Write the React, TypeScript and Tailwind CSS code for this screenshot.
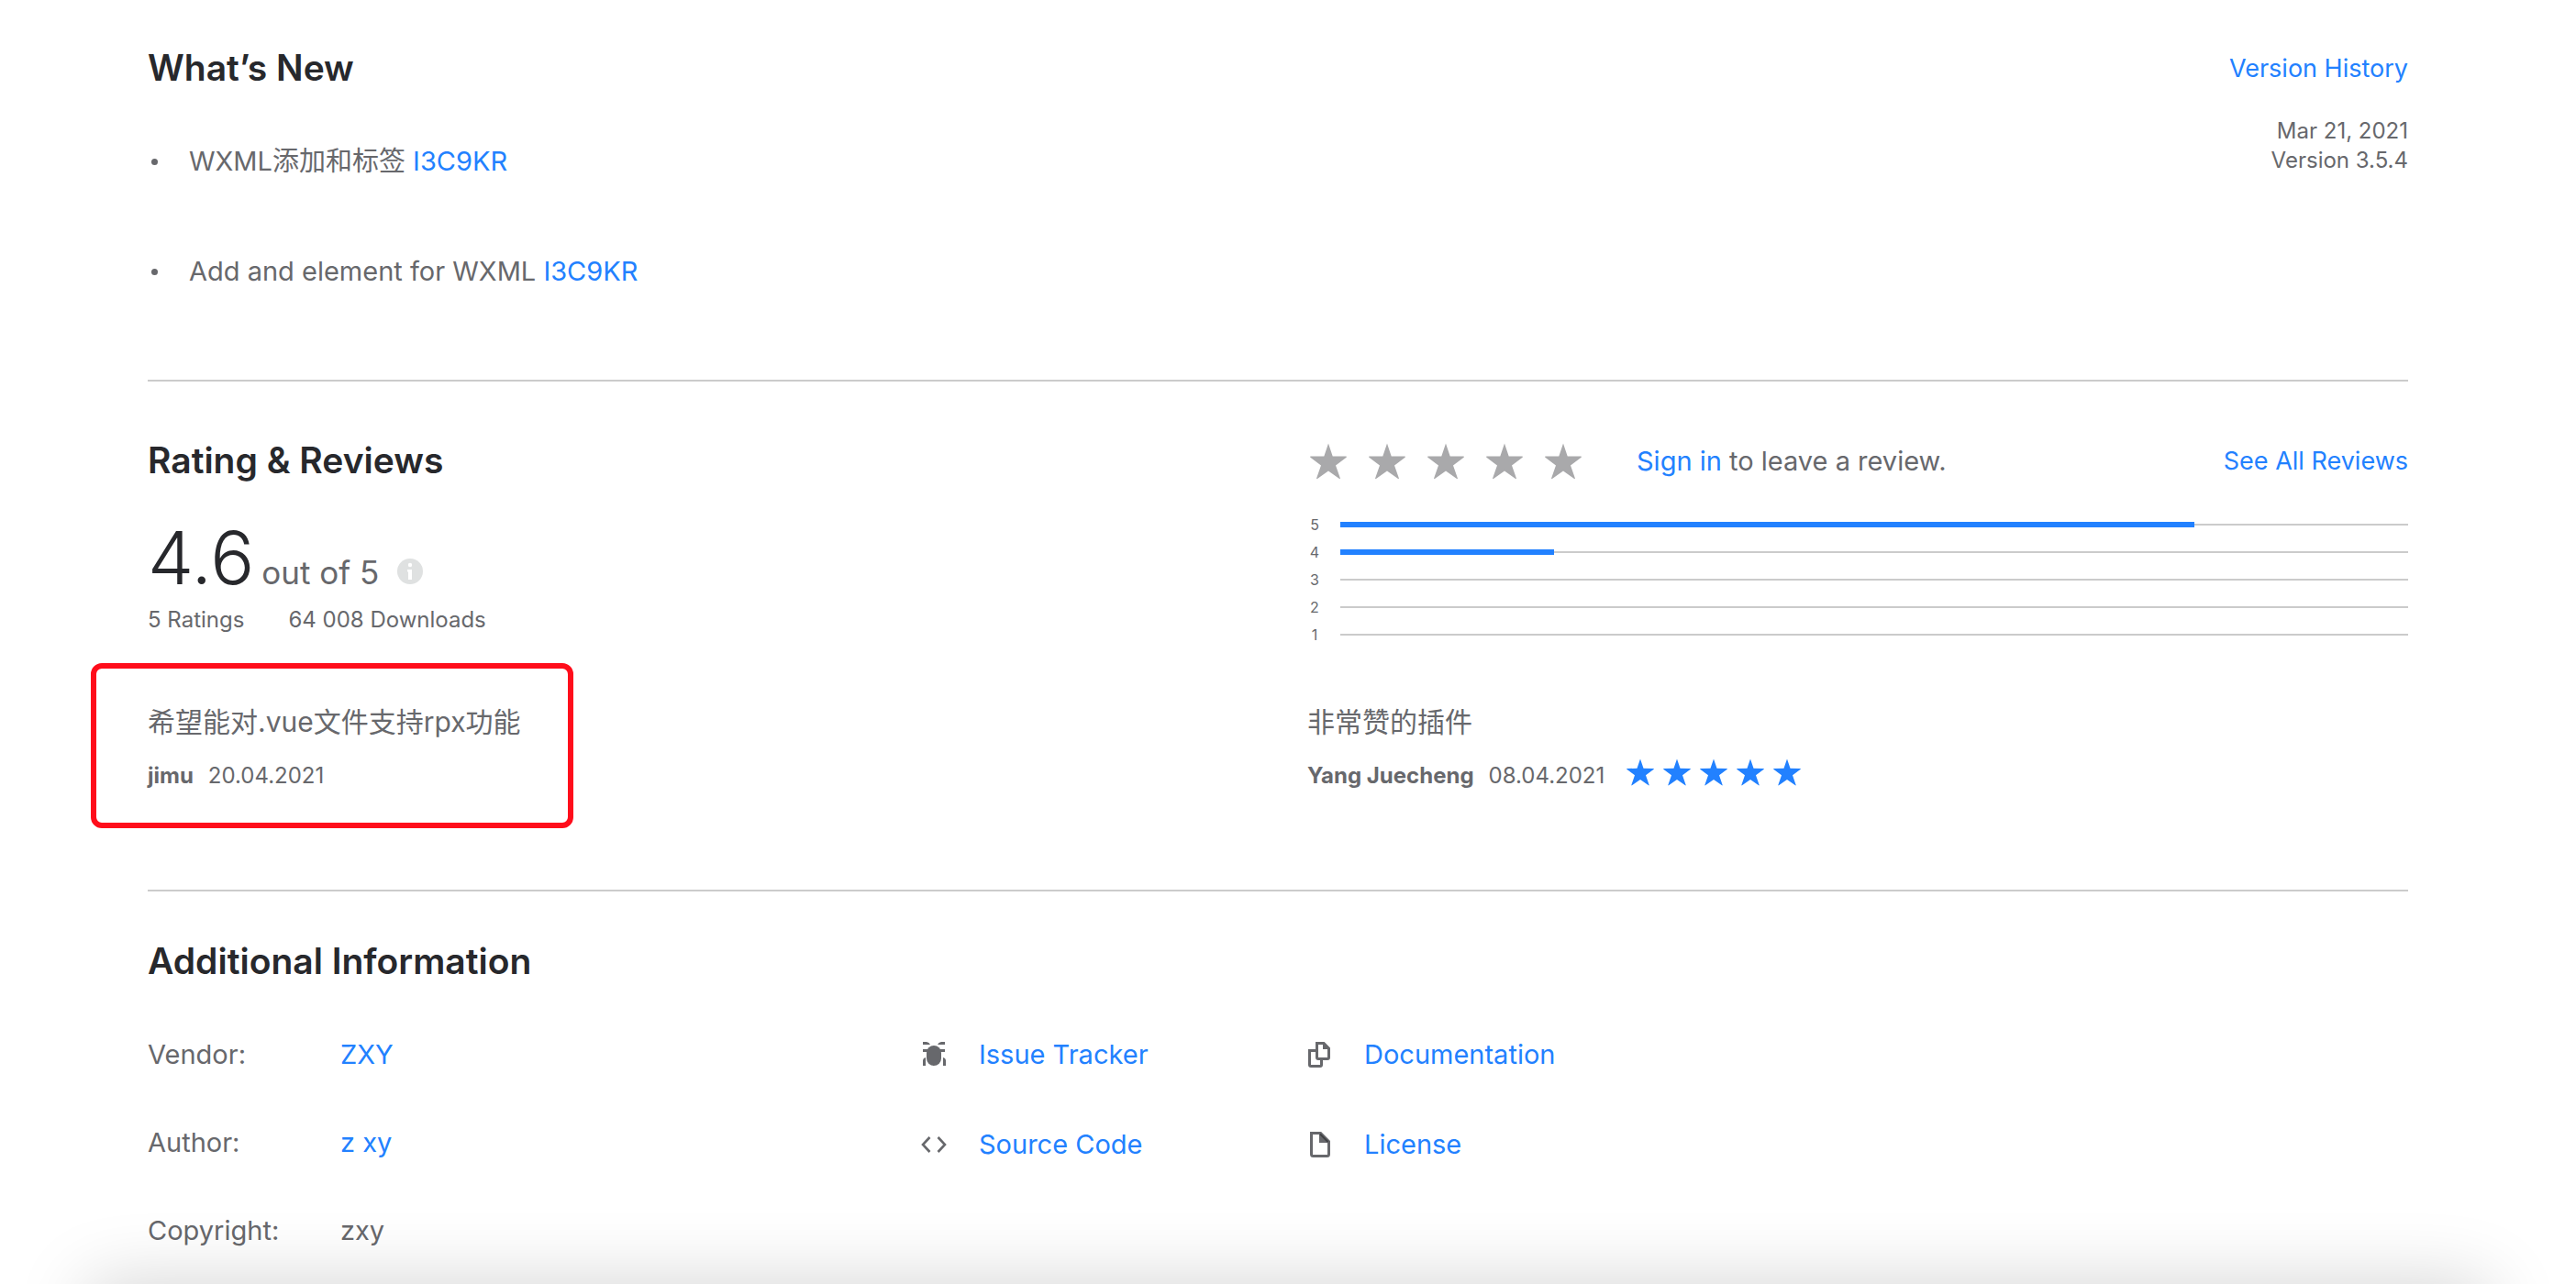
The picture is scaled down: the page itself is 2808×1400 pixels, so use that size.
import type { ReactNode } from "react";

function Star({ className }: { className: string }) {
  return (
    <svg viewBox="0 0 40 40" className={className} fill="currentColor" aria-hidden="true">
      <path d="M20 0.6 L24.7 14.4 L39.4 14.6 Q40.2 15 39.6 15.7 L28 24.4 L32.9 38.6 Q32.9 39.5 32 39.1 L20 30.6 L8 39.1 Q7.1 39.5 7.1 38.6 L12 24.4 L0.4 15.7 Q-0.2 15 0.6 14.6 L15.3 14.4 Z" />
    </svg>
  );
}

function BugIcon() {
  return (
    <svg viewBox="0 0 28 28" className="size-7" fill="currentColor" aria-hidden="true">
      <rect x="6" y="4" width="16" height="22" rx="8" />
      <path d="M2 0h4q3 0.300 4 3H2zM26 0h-4q-3 0.300-4 3h8zM2 8h24v3H2zM2 26v-6q0.300-2.500 3-3v9zM27 26v-6q-0.300-2.500-3-3v9z" />
    </svg>
  );
}

function CodeIcon() {
  return (
    <svg viewBox="0 0 28 28" className="size-7" fill="none" stroke="currentColor" strokeWidth="2.600" aria-hidden="true">
      <path d="M9.500 6 L2 14 L9.500 22 M18.500 6 L26 14 L18.500 22" />
    </svg>
  );
}

function CopyIcon() {
  return (
    <svg viewBox="0 0 28 28" className="size-7" fill="none" stroke="currentColor" strokeWidth="3" aria-hidden="true">
      <path d="M11.500 1.500h7.500l5.500 5.500v10q0 1.500-1.500 1.500h-10q-1.500 0-1.500-1.500z" />
      <path d="M18 1v7h7z" fill="currentColor" stroke="none" />
      <path d="M10 9.500H3.500v15.500q0 1.500 1.500 1.500h10q1.500 0 1.500-1.500V19" />
    </svg>
  );
}

function FileIcon() {
  return (
    <svg viewBox="0 0 28 28" className="size-7" fill="none" stroke="currentColor" strokeWidth="3" aria-hidden="true">
      <path d="M5.500 1.500h10l9 9v14q0 2-2 2h-15q-2 0-2-2z" />
      <path d="M14 2v10h10z" fill="currentColor" stroke="none" />
      <path d="M15 2.500l8.500 8.500" stroke="#3f4043" strokeWidth="2" />
    </svg>
  );
}

function Link({ children, className = "" }: { children: ReactNode; className?: string }) {
  return (
    <a href="#" className={`text-[#2281ff] ${className}`}>
      {children}
    </a>
  );
}

const HEADING = "text-[39px] leading-[48px] font-semibold text-[#27282c]";

const changes = ["WXML添加和标签", "Add and element for WXML"];

const distribution = [
  { stars: 5, share: 80 },
  { stars: 4, share: 20 },
  { stars: 3, share: 0 },
  { stars: 2, share: 0 },
  { stars: 1, share: 0 },
];

const details = [
  { label: "Vendor:", value: <Link>ZXY</Link> },
  { label: "Author:", value: <Link>z xy</Link> },
  { label: "Copyright:", value: "zxy" },
];

const resources = [
  { label: "Issue Tracker", icon: <BugIcon /> },
  { label: "Documentation", icon: <CopyIcon /> },
  { label: "Source Code", icon: <CodeIcon /> },
  { label: "License", icon: <FileIcon /> },
];

function Byline({ author, date, rating = 0 }: { author: string; date: string; rating?: number }) {
  return (
    <div className="mt-[11px] flex items-center text-2xl leading-12">
      <b>{author}</b>
      <time className="ml-4">{date}</time>
      {rating > 0 && (
        <div className="ml-6 flex gap-2.5 pb-2 text-[#2281ff]" role="img" aria-label={`${rating} stars`}>
          {Array.from({ length: rating }, (_, i) => (
            <Star key={i} className="size-[30px]" />
          ))}
        </div>
      )}
    </div>
  );
}

export default function App() {
  return (
    <main className="relative min-h-screen overflow-hidden bg-white pr-[183px] pl-[161px] font-['Inter','Noto_Sans_CJK_SC',sans-serif] text-[29px] leading-12 text-[#67686c]">
      <section className="flex justify-between border-b-2 border-[#cbcbcb] pt-[50px] pb-[94px]">
        <div>
          <h2 className={HEADING}>What’s New</h2>
          <ul className="mt-[54px] flex flex-col gap-[72px]">
            {changes.map((text) => (
              <li key={text} className="flex items-center">
                <span className="mr-[34px] ml-1 size-[7px] rounded-full bg-[#67686c]" />
                <span>
                  {text} <Link>I3C9KR</Link>
                </span>
              </li>
            ))}
          </ul>
        </div>
        <div className="text-right">
          <Link className="text-[27px]">Version History</Link>
          <p className="mt-7 text-2xl leading-8">
            Mar 21, 2021
            <br />
            Version 3.5.4
          </p>
        </div>
      </section>

      <section className="grid grid-cols-[1264px_1fr] border-b-2 border-[#cbcbcb] pt-[62px] pb-[67px]">
        <div>
          <h2 className={HEADING}>Rating &amp; Reviews</h2>
          <div className="mt-[34px] flex h-24 items-baseline">
            <span className="text-[80px] leading-24 font-light text-[#27282c]">4.6</span>
            <span className="ml-2 text-[35px]">out of 5</span>
            <svg viewBox="0 0 28 28" className="ml-5 size-7" role="img" aria-label="About this rating">
              <circle cx="14" cy="14" r="14" fill="#dfe1e1" />
              <circle cx="14" cy="7" r="2.200" fill="#fff" />
              <path d="M11 12h5v11h-4v-8.500h-1z" fill="#fff" />
            </svg>
          </div>
          <div className="mt-1 flex gap-12 text-2xl leading-8">
            <span>5 Ratings</span>
            <span>64 008 Downloads</span>
          </div>
        </div>
        <div className="pt-px pb-4">
          <div className="flex items-center">
            <div className="ml-[3px] flex gap-6">
              {[1, 2, 3, 4, 5].map((n) => (
                <button key={n} type="button" aria-label={`Rate ${n}`} className="text-[#a9a9ab]">
                  <Star className="size-10" />
                </button>
              ))}
            </div>
            <p className="ml-[60px]">
              <Link>Sign in</Link> to leave a review.
            </p>
            <Link className="ml-auto text-[27px]">See All Reviews</Link>
          </div>
          <ul className="mt-[30px] text-base leading-[30px]">
            {distribution.map(({ stars, share }) => (
              <li key={stars} className="flex items-center gap-5">
                <span className="w-4 text-center">{stars}</span>
                <div className="flex flex-1 items-center">
                  <div className="h-1.5 bg-[#2281ff]" style={{ width: `${share}%` }} />
                  <div className="h-0.5 flex-1 bg-[#cbcbcb]" />
                </div>
              </li>
            ))}
          </ul>
        </div>
        <article className="-ml-[62px] justify-self-start rounded-xl border-6 border-[#ff0d1b] pt-[34px] pr-[51px] pb-[27px] pl-14">
          <p className="text-3xl leading-12">希望能对.vue文件支持rpx功能</p>
          <Byline author="jimu" date="20.04.2021" />
        </article>
        <article className="pt-10">
          <p className="text-3xl leading-12">非常赞的插件</p>
          <Byline author="Yang Juecheng" date="08.04.2021" rating={5} />
        </article>
      </section>

      <section className="pt-[52px]">
        <h2 className={HEADING}>Additional Information</h2>
        <div className="mt-[54px] grid grid-cols-[843px_1fr]">
          <dl className="grid grid-cols-[210px_1fr] gap-y-12">
            {details.map(({ label, value }) => (
              <div key={label} className="contents">
                <dt>{label}</dt>
                <dd>{value}</dd>
              </div>
            ))}
          </dl>
          <ul className="grid grid-cols-[420px_1fr] content-start gap-y-[50px]">
            {resources.map(({ label, icon }) => (
              <li key={label} className="flex items-center gap-[35px]">
                {icon}
                <Link>{label}</Link>
              </li>
            ))}
          </ul>
        </div>
      </section>

      <div className="pointer-events-none absolute inset-x-24 top-full h-20 shadow-[0_0_80px_rgba(0,0,0,0.18)]" />
    </main>
  );
}
